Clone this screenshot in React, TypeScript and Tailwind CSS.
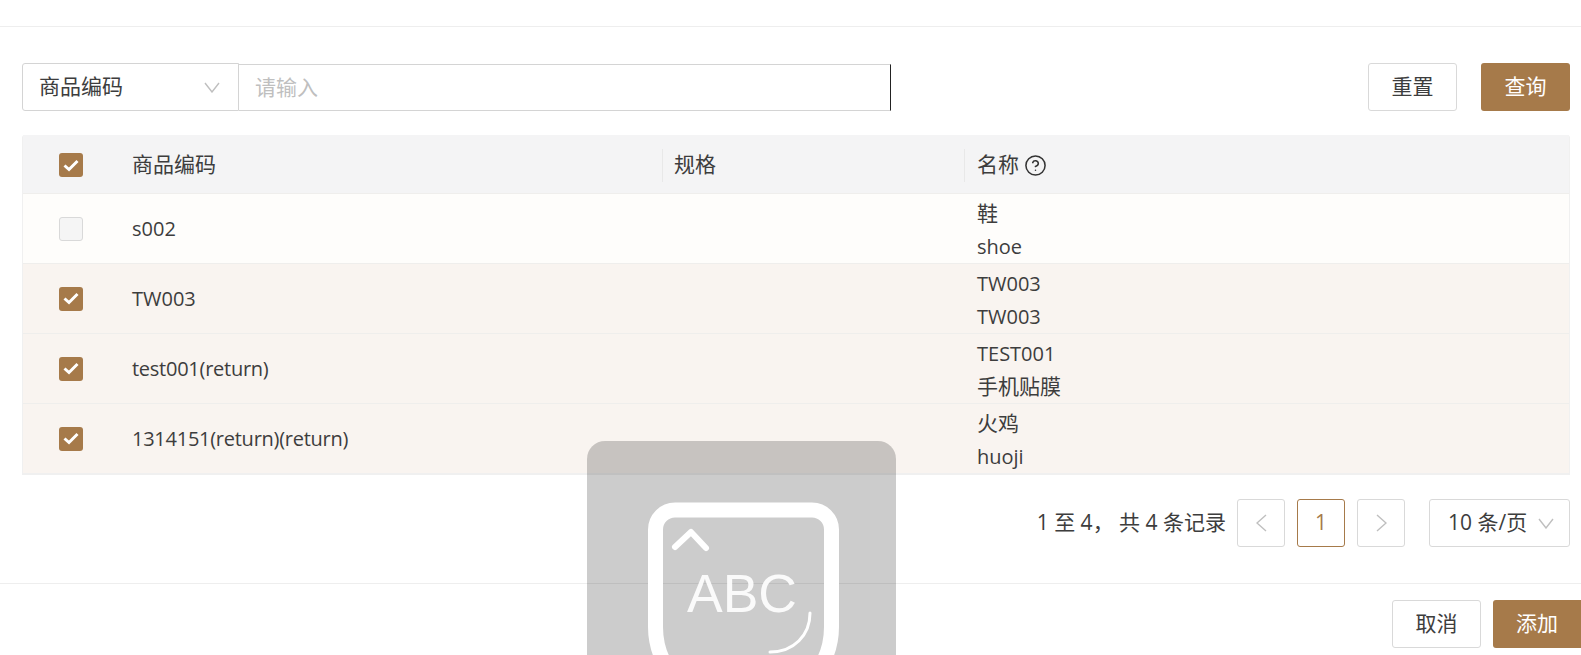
import { CircleHelp } from 'lucide-react';

const rows = [
  { code: 's002', name: '鞋', en: 'shoe', selected: false },
  { code: 'TW003', name: 'TW003', en: 'TW003', selected: true },
  { code: 'test001(return)', name: 'TEST001', en: '手机贴膜', selected: true },
  { code: '1314151(return)(return)', name: '火鸡', en: 'huoji', selected: true },
];

const hasCjk = (text: string) => /[\u4e00-\u9fff]/.test(text);

const Chevron = ({ dir = 'down' }: { dir?: 'down' | 'left' | 'right' }) => {
  const pts = dir === 'down' ? '1,1 8,10 15,1' : dir === 'left' ? '10,1 1,9 10,17' : '1,1 10,9 1,17';
  const size = dir === 'down' ? { w: 16, h: 11 } : { w: 11, h: 18 };
  return (
    <svg width={size.w} height={size.h} viewBox={`0 0 ${size.w} ${size.h}`} fill="none" stroke="#bfbfbf" strokeWidth="1.4">
      <polyline points={pts} />
    </svg>
  );
};

const Checkbox = ({ checked, disabled }: { checked?: boolean; disabled?: boolean }) => (
  <div
    className={
      checked
        ? 'flex h-6 w-6 items-center justify-center rounded-[3px] bg-[#a67a4a]'
        : disabled
          ? 'h-6 w-6 rounded-[3px] border border-[#d9d9d9] bg-[#f5f5f5]'
          : 'h-6 w-6 rounded-[3px] border border-[#d9d9d9] bg-white'
    }
  >
    {checked && (
      <svg width="16" height="13" viewBox="0 0 16 13" fill="none" stroke="#fff" strokeWidth="3">
        <polyline points="1.5,6.5 6,10.5 14.5,2" />
      </svg>
    )}
  </div>
);

const ImeOverlay = () => (
  <div className="absolute left-[587px] top-[441px] h-[309px] w-[309px] rounded-[18px] bg-black/20">
    <svg className="blur-[0.5px]" width="309" height="309" viewBox="0 0 309 309" fill="none" stroke="#fff">
      <path d="M88 69H225a19.500 19.500 0 0 1 19.500 19.500V186a77 77 0 0 1-77 77H145.500a77 77 0 0 1-77-77V88.500A19.500 19.500 0 0 1 88 69Z" strokeWidth="15" />
      <polyline points="88,106 104,91 119,107" strokeWidth="6" strokeLinecap="round" strokeLinejoin="round" />
      <path d="M223 172c0 22-16 39-40 39" strokeWidth="3" strokeLinecap="round" />
      <text x="100" y="171" fill="#fff" fillOpacity="0.9" stroke="none" fontSize="53.500" fontFamily="'Liberation Sans', sans-serif">
        ABC
      </text>
    </svg>
  </div>
);

export default function App() {
  return (
    <div className="relative h-[655px] w-full overflow-hidden bg-white font-['Open_Sans','Noto_Sans_CJK_SC',sans-serif] text-[21px] text-[#3d3d3d]">
      <div className="h-[27px] border-b border-[#eeeeee]" />

      <div className="pl-[22px] pr-[11px] pt-[36px]">
        <div className="flex h-[48px] items-start justify-between">
          <div className="flex h-[48px]">
            <div className="flex w-[217px] items-center justify-between rounded-l-[3px] border border-[#d4d4d4] pl-[16px] pr-[18px]">
              <span>商品编码</span>
              <Chevron />
            </div>
            <input
              placeholder="请输入"
              className="mt-[1px] h-[47px] w-[652px] border-y border-r border-y-[#d4d4d4] border-r-[#222] pb-[2px] pl-[16px] text-[21px] outline-none placeholder:text-[#bfbfbf]"
            />
          </div>
          <div className="flex gap-[24px]">
            <button className="h-[48px] w-[89px] rounded-[3px] border border-[#d9d9d9] bg-white">重置</button>
            <button className="h-[48px] w-[89px] rounded-[3px] bg-[#a67a4a] text-white">查询</button>
          </div>
        </div>

        <div className="mt-[24px] rounded-t-[3px] border-x border-b-2 border-[#f0f0f0]">
          <div className="flex h-[58px] items-center bg-[#f4f4f5] pt-[2px]">
            <div className="flex w-[108px] justify-center pr-[12px]">
              <Checkbox checked />
            </div>
            <div className="w-[531px] pl-[1px]">商品编码</div>
            <div className="flex h-[33px] w-[302px] items-center border-l border-[#e8e8e8] pl-[11px]">规格</div>
            <div className="flex h-[33px] flex-1 items-center gap-[5px] border-l border-[#e8e8e8] pl-[12px]">
              名称
              <CircleHelp size={23} strokeWidth={1.6} color="#333" />
            </div>
          </div>
          {rows.map((row) => (
            <div
              key={row.code}
              className={`flex h-[70px] items-center border-t border-[#efeeec] ${row.selected ? 'bg-[#f9f4f0]' : 'bg-[#fefdfb]'}`}
            >
              <div className="flex w-[108px] justify-center pr-[12px]">
                <Checkbox checked={row.selected} disabled={!row.selected} />
              </div>
              <div className={`w-[531px] pl-[1px] pt-[1px] text-[20px] ${row.code.includes('(') ? 'tracking-[-0.26px]' : ''}`}>
                {row.code}
              </div>
              <div className="w-[302px]" />
              <div className="flex flex-1 flex-col pl-[13px] pt-[2px] leading-[33px]">
                <span className={hasCjk(row.name) ? 'text-[21px]' : 'text-[20px]'}>{row.name}</span>
                <span className={hasCjk(row.en) ? 'text-[21px]' : 'text-[20px]'}>{row.en}</span>
              </div>
            </div>
          ))}
        </div>

        <div className="mt-[24px] flex h-[48px] items-center justify-end">
          <span className="mr-[11px]">1 至 4， 共 4 条记录</span>
          <div className="flex gap-[12px]">
            <button className="flex h-[48px] w-[48px] items-center justify-center rounded-[3px] border border-[#d9d9d9]">
              <Chevron dir="left" />
            </button>
            <button className="h-[48px] w-[48px] rounded-[3px] border border-[#a67a4a] text-[#a67a4a]">1</button>
            <button className="flex h-[48px] w-[48px] items-center justify-center rounded-[3px] border border-[#d9d9d9]">
              <Chevron dir="right" />
            </button>
          </div>
          <div className="ml-[24px] flex h-[48px] w-[141px] items-center justify-between rounded-[3px] border border-[#d9d9d9] pl-[18px] pr-[15px]">
            <span>10 条/页</span>
            <Chevron />
          </div>
        </div>
      </div>

      <div className="mt-[36px] flex h-[72px] justify-end gap-[12px] border-t border-[#eeeeee] pt-[16px]">
        <button className="h-[48px] w-[89px] rounded-[3px] border border-[#d9d9d9] bg-white">取消</button>
        <button className="h-[48px] w-[88px] rounded-l-[3px] bg-[#a67a4a] text-white">添加</button>
      </div>

      <ImeOverlay />
    </div>
  );
}
